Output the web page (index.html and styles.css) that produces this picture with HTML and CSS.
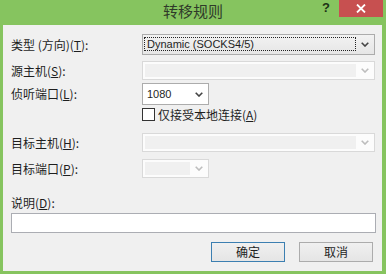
FILE: index.html
```html
<!DOCTYPE html>
<html lang="zh-CN">
<head>
<meta charset="utf-8">
<title>转移规则</title>
<link rel="stylesheet" href="styles.css">
</head>
<body>
<div class="window">
  <div class="titlebar">
    <span class="title">转移规则</span>
    <span class="help">?</span>
    <span class="close">
      <svg width="10" height="9" viewBox="0 0 10 9"><path d="M1 0.5 L9 8.5 M9 0.5 L1 8.5" stroke="#fff" stroke-width="1.8" fill="none"/></svg>
    </span>
  </div>
  <div class="client">
    <div class="row r1">
      <span class="lbl">类型 (方向)(<u>T</u>):</span>
      <div class="combo active wide">
        <div class="focus"><span class="val latin">Dynamic (SOCKS4/5)</span></div>
        <span class="arrow"><svg width="8" height="5" viewBox="0 0 8 5"><path d="M0.7 0.7 L4 4 L7.3 0.7" stroke="#444" stroke-width="1.6" fill="none"/></svg></span>
      </div>
    </div>
    <div class="row r2">
      <span class="lbl">源主机(<u>S</u>):</span>
      <div class="combo disabled wide">
        <div class="fill"></div>
        <span class="arrow"><svg width="8" height="5" viewBox="0 0 8 5"><path d="M0.7 0.7 L4 4 L7.3 0.7" stroke="#bdbdbd" stroke-width="1.6" fill="none"/></svg></span>
      </div>
    </div>
    <div class="row r3">
      <span class="lbl">侦听端口(<u>L</u>):</span>
      <div class="combo editable narrow">
        <span class="val latin">1080</span>
        <span class="arrow"><svg width="8" height="5" viewBox="0 0 8 5"><path d="M0.7 0.7 L4 4 L7.3 0.7" stroke="#444" stroke-width="1.6" fill="none"/></svg></span>
      </div>
    </div>
    <div class="row r4">
      <span class="lbl"></span>
      <label class="check"><span class="box"></span><span>仅接受本地连接(<u>A</u>)</span></label>
    </div>
    <div class="row r5">
      <span class="lbl">目标主机(<u>H</u>):</span>
      <div class="combo disabled wide">
        <div class="fill"></div>
        <span class="arrow"><svg width="8" height="5" viewBox="0 0 8 5"><path d="M0.7 0.7 L4 4 L7.3 0.7" stroke="#bdbdbd" stroke-width="1.6" fill="none"/></svg></span>
      </div>
    </div>
    <div class="row r6">
      <span class="lbl">目标端口(<u>P</u>):</span>
      <div class="combo disabled narrow">
        <div class="fill"></div>
        <span class="arrow"><svg width="8" height="5" viewBox="0 0 8 5"><path d="M0.7 0.7 L4 4 L7.3 0.7" stroke="#bdbdbd" stroke-width="1.6" fill="none"/></svg></span>
      </div>
    </div>
    <div class="desc-label">说明(<u>D</u>):</div>
    <div class="textbox"></div>
    <div class="buttons">
      <button class="btn default">确定</button>
      <button class="btn">取消</button>
    </div>
  </div>
</div>
</body>
</html>
```
FILE: styles.css
```css
* { box-sizing: border-box; }
html, body {
  margin: 0;
  padding: 0;
  width: 386px;
  height: 274px;
  overflow: hidden;
  background: #86c45f;
}
.window {
  width: 386px;
  height: 274px;
  display: flex;
  flex-direction: column;
  background: #86c45f;
  font-family: "Noto Sans CJK SC", "Liberation Sans", sans-serif;
  font-size: 12px;
  color: #1e1e1e;
}
.titlebar {
  position: relative;
  height: 25px;
  flex: none;
  display: flex;
  justify-content: center;
}
.title {
  font-size: 15px;
  line-height: 22px;
  color: #2f3a2a;
}
.help {
  position: absolute;
  left: 322px;
  top: 0;
  font-family: "Liberation Sans", sans-serif;
  font-weight: bold;
  font-size: 13px;
  line-height: 16px;
  color: #1d3315;
}
.close {
  position: absolute;
  left: 339px;
  top: 0;
  width: 44px;
  height: 17px;
  background: #c75050;
  display: flex;
  align-items: center;
  justify-content: center;
}
.close svg { display: block; }
.client {
  flex: 1;
  margin: 0 4px 3px 3px;
  background: #f0f0f0;
  padding: 9px 0 0 8px;
  display: flex;
  flex-direction: column;
}
.row {
  display: flex;
  align-items: center;
}
.lbl {
  width: 131px;
  flex: none;
  line-height: 14px;
  white-space: nowrap;
}
u { text-decoration: underline; text-underline-offset: 1px; }
.latin { font-family: "Liberation Sans", sans-serif; font-size: 11px; }
.r1 { height: 21px; }
.r2 { height: 19px; margin-top: 6px; }
.r3 { height: 22px; margin-top: 3px; }
.r4 { height: 13px; margin-top: 3px; }
.r5 { height: 19px; margin-top: 12px; }
.r6 { height: 19px; margin-top: 7px; }
.combo {
  height: 100%;
  display: flex;
  align-items: stretch;
  border: 1px solid #acacac;
  position: relative;
}
.wide { width: 233px; }
.narrow { width: 67px; }
.arrow {
  width: 18px;
  flex: none;
  display: flex;
  align-items: center;
  justify-content: center;
}
.arrow svg { display: block; }
.combo.active {
  background: linear-gradient(#f2f2f2, #e6e6e6);
  padding: 2px 0 3px 1px;
}
.combo.active .focus {
  flex: 1;
  border: 1px dotted #222;
  display: flex;
  align-items: center;
  padding-left: 2px;
}
.combo.active .arrow { margin-top: 1px; }
.combo.editable {
  background: #fff;
  padding-left: 4px;
  align-items: center;
}
.combo.editable .val { flex: 1; }
.combo.editable .arrow { align-self: stretch; }
.combo.disabled {
  border-color: #d9d9d9;
  background: #fcfcfc;
  padding: 2px 0 2px 2px;
}
.combo.disabled .fill {
  flex: 1;
  background: #f0f0f0;
}
.check {
  display: flex;
  align-items: center;
  gap: 3px;
  line-height: 14px;
  white-space: nowrap;
}
.box {
  width: 13px;
  height: 13px;
  border: 1px solid #333;
  background: #fff;
  flex: none;
}
.desc-label {
  margin-top: 18px;
  line-height: 14px;
}
.textbox {
  margin-top: 3px;
  width: 365px;
  height: 20px;
  background: #fff;
  border: 1px solid #abadb3;
}
.buttons {
  margin-top: 9px;
  display: flex;
  justify-content: flex-end;
  gap: 14px;
  padding-right: 9px;
}
.btn {
  width: 74px;
  height: 20px;
  padding: 0;
  font-family: "Noto Sans CJK SC", sans-serif;
  font-size: 12px;
  line-height: 18px;
  color: #1e1e1e;
  border: 1px solid #acacac;
  background: linear-gradient(#f0f0f0, #e5e5e5);
  border-radius: 0;
}
.btn.default { border-color: #3c7fb1; }
```
